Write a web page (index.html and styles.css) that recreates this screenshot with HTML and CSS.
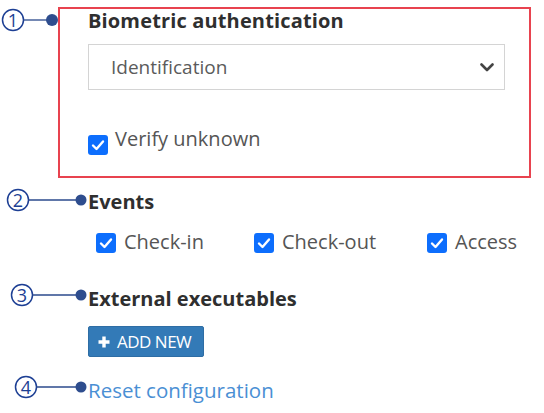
FILE: index.html
```html
<!DOCTYPE html>
<html>
<head>
<meta charset="utf-8">
<link rel="stylesheet" href="styles.css">
</head>
<body>
<div class="page">
  <section class="bio">
    <h2 class="title">Biometric authentication</h2>
    <div class="select">
      <span>Identification</span>
      <svg class="chev" width="14" height="9" viewBox="0 0 14 9"><path d="M1.5 1.5 L7 7 L12.5 1.5" fill="none" stroke="#444" stroke-width="2.6" stroke-linecap="round" stroke-linejoin="round"/></svg>
    </div>
    <label class="check verify">
      <span class="box"><svg width="20" height="20" viewBox="0 0 20 20"><path d="M5 10.5 L8.5 14 L15 6.5" fill="none" stroke="#fff" stroke-width="2.4" stroke-linecap="round" stroke-linejoin="round"/></svg></span>
      <span class="lbl">Verify unknown</span>
    </label>
  </section>

  <h2 class="head events-head">Events</h2>
  <div class="events">
    <label class="check">
      <span class="box"><svg width="20" height="20" viewBox="0 0 20 20"><path d="M5 10.5 L8.5 14 L15 6.5" fill="none" stroke="#fff" stroke-width="2.4" stroke-linecap="round" stroke-linejoin="round"/></svg></span>
      <span class="lbl">Check-in</span>
    </label>
    <label class="check">
      <span class="box"><svg width="20" height="20" viewBox="0 0 20 20"><path d="M5 10.5 L8.5 14 L15 6.5" fill="none" stroke="#fff" stroke-width="2.4" stroke-linecap="round" stroke-linejoin="round"/></svg></span>
      <span class="lbl">Check-out</span>
    </label>
    <label class="check">
      <span class="box"><svg width="20" height="20" viewBox="0 0 20 20"><path d="M5 10.5 L8.5 14 L15 6.5" fill="none" stroke="#fff" stroke-width="2.4" stroke-linecap="round" stroke-linejoin="round"/></svg></span>
      <span class="lbl">Access</span>
    </label>
  </div>

  <h2 class="head ext-head">External executables</h2>
  <button class="add"><svg width="12" height="12" viewBox="0 0 12 12"><path d="M6 0.5 V11.5 M0.5 6 H11.5" stroke="#fff" stroke-width="3.4"/></svg><span>ADD NEW</span></button>

  <a class="reset" href="#">Reset configuration</a>
</div>

<svg class="notes" width="544" height="413" viewBox="0 0 544 413">
  <g fill="none" stroke="#1d3f94" stroke-width="1.5">
    <circle cx="13" cy="20" r="10.5"/>
    <circle cx="18" cy="200" r="10.5"/>
    <circle cx="22" cy="295" r="10.5"/>
    <circle cx="26" cy="387" r="10.5"/>
  </g>
  <g stroke="#2b4a8c" stroke-width="1.3">
    <line x1="23.5" y1="20" x2="50" y2="20"/>
    <line x1="28.5" y1="200" x2="80" y2="200"/>
    <line x1="32.5" y1="295" x2="80" y2="295"/>
    <line x1="36.5" y1="387" x2="80" y2="387"/>
  </g>
  <g fill="#2e4d8e">
    <circle cx="52" cy="20" r="6"/>
    <circle cx="81" cy="200" r="5.5"/>
    <circle cx="81" cy="295" r="5.5"/>
    <circle cx="81" cy="387" r="5.5"/>
  </g>
  <g class="num" fill="#1d3f94" text-anchor="middle">
    <text x="13" y="27">1</text>
    <text x="18" y="207">2</text>
    <text x="22" y="302">3</text>
    <text x="26" y="394">4</text>
  </g>
</svg>
</body>
</html>
```

FILE: styles.css
```css
html, body {
  margin: 0;
  padding: 0;
  background: #fff;
}
body {
  position: relative;
  width: 544px;
  height: 413px;
  overflow: hidden;
  font-family: "Open Sans", "Noto Sans", sans-serif;
  color: #555;
}
.page {
  padding: 7px 0 0 58px;
  display: flex;
  flex-direction: column;
  align-items: flex-start;
}
.bio {
  box-sizing: border-box;
  width: 473px;
  height: 171px;
  border: 2px solid #e8434f;
  padding: 0 0 0 28px;
}
.title, .head {
  margin: 0;
  font-size: 20px;
  line-height: 24px;
  font-weight: 700;
  color: #2f2f2f;
}
.title {
  letter-spacing: 0.15px;
}
.select {
  box-sizing: border-box;
  margin-top: 11px;
  width: 417px;
  height: 46px;
  border: 1.5px solid #d4d4d4;
  display: flex;
  align-items: center;
  justify-content: space-between;
  padding: 0 10px 0 22px;
  font-size: 19px;
  color: #5b5b5b;
}
.chev {
  margin-top: 1px;
}
.check {
  display: flex;
  align-items: flex-start;
  gap: 7px;
  font-size: 20px;
  line-height: 24px;
  color: #555;
}
.box {
  width: 20px;
  height: 20px;
  border-radius: 3px;
  background: #0d6efd;
  display: block;
  margin-top: 8px;
  flex: none;
}
.box svg {
  display: block;
}
.verify {
  margin-top: 37px;
}
.head {
  margin-left: 30px;
}
.events-head {
  margin-top: 12px;
}
.events {
  margin: 16px 0 0 38px;
  display: grid;
  grid-template-columns: 158px 173px auto;
}
.events .check {
  gap: 8px;
}
.events .box {
  margin-top: 3px;
}
.ext-head {
  margin-top: 33px;
}
.add {
  margin: 15px 0 0 30px;
  box-sizing: border-box;
  width: 116px;
  height: 31px;
  background: #337ab7;
  border: 1px solid #2e6da4;
  border-radius: 2px;
  color: #fff;
  display: flex;
  align-items: center;
  gap: 7px;
  padding: 0 0 0 9px;
  font-family: "Open Sans", sans-serif;
  font-size: 17px;
  letter-spacing: -0.5px;
}
.add svg {
  display: block;
}
.reset {
  margin: 21px 0 0 30px;
  font-size: 20.5px;
  line-height: 24px;
  color: #4a8fd4;
  text-decoration: none;
}
.notes {
  position: absolute;
  left: 0;
  top: 0;
  pointer-events: none;
}
.num {
  font-family: "Open Sans", sans-serif;
  font-size: 18px;
}
```
